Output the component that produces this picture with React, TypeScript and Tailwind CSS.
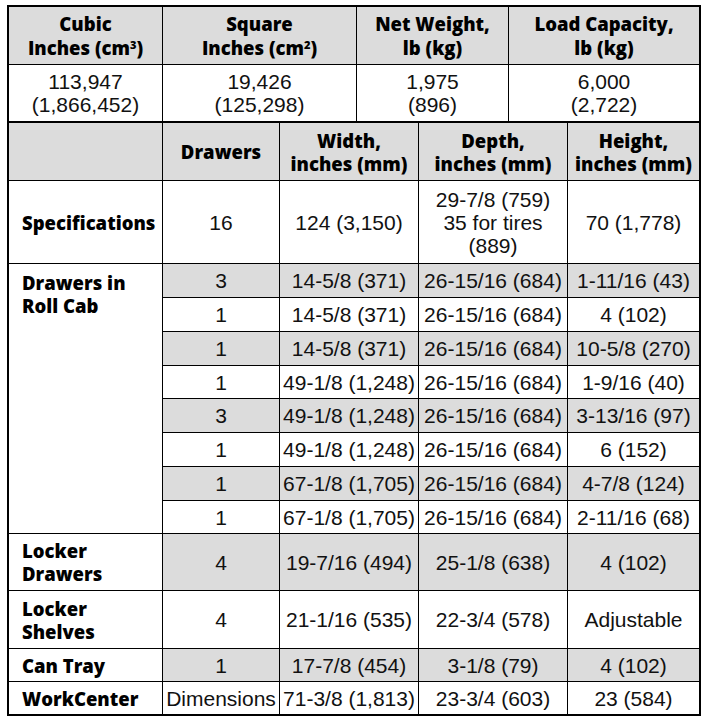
import React from "react";

const headFont = "font-['Open_Sans',sans-serif] font-extrabold text-[18.5px] text-black";
const data = "font-['Liberation_Sans',Arial,sans-serif] text-[21px] leading-[23px] text-[#111]";
const gray = "bg-[#dcdcdc]";

function Cell({
  children,
  shade,
  className = "",
}: {
  children?: React.ReactNode;
  shade?: boolean;
  className?: string;
}) {
  return (
    <div
      className={`flex flex-col items-center justify-center text-center whitespace-nowrap ${
        shade ? gray : "bg-white"
      } ${data} ${className}`}
    >
      {children}
    </div>
  );
}

function HeadCell({ children, className = "" }: { children: React.ReactNode; className?: string }) {
  return (
    <div
      className={`flex flex-col items-center justify-center text-center whitespace-nowrap ${gray} ${headFont} ${className}`}
    >
      {children}
    </div>
  );
}

function Label({ children, className = "" }: { children: React.ReactNode; className?: string }) {
  return (
    <div className={`flex flex-col justify-center bg-white pl-[13px] ${headFont} leading-[23px] ${className}`}>
      {children}
    </div>
  );
}

const rollCab = [
  ["3", "14-5/8 (371)", "26-15/16 (684)", "1-11/16 (43)"],
  ["1", "14-5/8 (371)", "26-15/16 (684)", "4 (102)"],
  ["1", "14-5/8 (371)", "26-15/16 (684)", "10-5/8 (270)"],
  ["1", "49-1/8 (1,248)", "26-15/16 (684)", "1-9/16 (40)"],
  ["3", "49-1/8 (1,248)", "26-15/16 (684)", "3-13/16 (97)"],
  ["1", "49-1/8 (1,248)", "26-15/16 (684)", "6 (152)"],
  ["1", "67-1/8 (1,705)", "26-15/16 (684)", "4-7/8 (124)"],
  ["1", "67-1/8 (1,705)", "26-15/16 (684)", "2-11/16 (68)"],
];

export default function App() {
  return (
    <div className="w-[708px] h-[722px] bg-white pt-[5px] pl-[7px]">
      <div className="w-[694px] border-2 border-black bg-black">
        {/* Capacity summary */}
        <div className="grid grid-cols-[153px_193px_151px_190px] grid-rows-[57px_56px] gap-px bg-black border-b-2 border-black">
          <HeadCell className="leading-[24px]">
            <span>Cubic</span>
            <span>
              Inches (cm<sup className="text-[11px]">3</sup>)
            </span>
          </HeadCell>
          <HeadCell className="leading-[24px]">
            <span>Square</span>
            <span>
              Inches (cm<sup className="text-[11px]">2</sup>)
            </span>
          </HeadCell>
          <HeadCell className="leading-[24px]">
            <span>Net Weight,</span>
            <span>lb (kg)</span>
          </HeadCell>
          <HeadCell className="leading-[24px]">
            <span>Load Capacity,</span>
            <span>lb (kg)</span>
          </HeadCell>
          <Cell>
            <span>113,947</span>
            <span>(1,866,452)</span>
          </Cell>
          <Cell>
            <span>19,426</span>
            <span>(125,298)</span>
          </Cell>
          <Cell>
            <span>1,975</span>
            <span>(896)</span>
          </Cell>
          <Cell>
            <span>6,000</span>
            <span>(2,722)</span>
          </Cell>
        </div>

        {/* Dimensions */}
        <div className="grid grid-cols-[153px_116px_138px_148px_131px] grid-rows-[57px_82px_33px_33px_33px_32px_33px_33px_33px_32px_56px_57px_32px_32px] gap-px bg-black">
          <div className={gray} />
          <HeadCell className="leading-[23px]">Drawers</HeadCell>
          <HeadCell className="leading-[23px]">
            <span>Width,</span>
            <span>inches (mm)</span>
          </HeadCell>
          <HeadCell className="leading-[23px]">
            <span>Depth,</span>
            <span>inches (mm)</span>
          </HeadCell>
          <HeadCell className="leading-[23px]">
            <span>Height,</span>
            <span>inches (mm)</span>
          </HeadCell>

          <Label>Specifications</Label>
          <Cell>16</Cell>
          <Cell>124 (3,150)</Cell>
          <Cell>
            <span>29-7/8 (759)</span>
            <span>35 for tires</span>
            <span>(889)</span>
          </Cell>
          <Cell>70 (1,778)</Cell>

          <Label className="row-span-8 justify-start pt-[7px]">
            <span>Drawers in</span>
            <span>Roll Cab</span>
          </Label>
          {rollCab.map((row, i) =>
            row.map((v, j) => (
              <Cell key={`${i}-${j}`} shade={i % 2 === 0}>
                {v}
              </Cell>
            ))
          )}

          <Label>
            <span>Locker</span>
            <span>Drawers</span>
          </Label>
          <Cell shade>4</Cell>
          <Cell shade>19-7/16 (494)</Cell>
          <Cell shade>25-1/8 (638)</Cell>
          <Cell shade>4 (102)</Cell>

          <Label>
            <span>Locker</span>
            <span>Shelves</span>
          </Label>
          <Cell>4</Cell>
          <Cell>21-1/16 (535)</Cell>
          <Cell>22-3/4 (578)</Cell>
          <Cell>Adjustable</Cell>

          <Label>Can Tray</Label>
          <Cell shade>1</Cell>
          <Cell shade>17-7/8 (454)</Cell>
          <Cell shade>3-1/8 (79)</Cell>
          <Cell shade>4 (102)</Cell>

          <Label>WorkCenter</Label>
          <Cell>Dimensions</Cell>
          <Cell>71-3/8 (1,813)</Cell>
          <Cell>23-3/4 (603)</Cell>
          <Cell>23 (584)</Cell>
        </div>
      </div>
    </div>
  );
}
